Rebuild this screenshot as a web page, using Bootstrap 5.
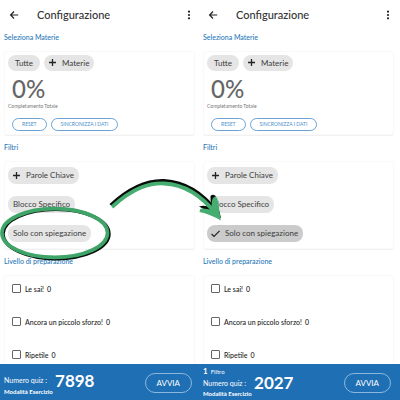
<!DOCTYPE html>
<html lang="it">
<head>
<meta charset="utf-8">
<meta name="viewport" content="width=device-width, initial-scale=1">
<title>Configurazione</title>
<link href="https://cdn.jsdelivr.net/npm/bootstrap@5.3.0/dist/css/bootstrap.min.css" rel="stylesheet">
<style>
body{font-family:Lato,"Liberation Sans",sans-serif;font-size:8px;line-height:10px;color:#333;background:#fff}
.screens{display:grid;grid-template-columns:199fr 201fr;height:100vh;overflow:hidden}
.screen{min-width:0;min-height:0}
.screen main{min-height:0;overflow:hidden;padding:0 4px}
.screen-b main,.screen-b .topbar{padding-right:6px}
.topbar{height:32px;padding:0 4px}
.topbar h1{font-size:11px;line-height:14px;font-weight:500;color:#333;margin-left:18px}
.icon-btn{border:0;background:none;padding:0;line-height:0;color:#222}
.topbar .icon-btn:first-child{margin-left:5px}
.label{font-size:7px;line-height:12px;font-weight:500;color:#2878b8;height:12px}
.panel{border:1px solid #f9f9f9;border-radius:3px;box-shadow:0 1px 1px #f0f0f0;padding:3px;margin-bottom:6px}
.panel-filters{padding-top:5px;gap:12px;height:88px}
.chip{border:0;border-radius:8px;background:#e5e5e5;color:#3c3c3c;height:16px;padding:0 5px;font-size:8px;line-height:16px;white-space:nowrap}
.panel-filters .chip{height:17px}
.chip-all{padding:0 7px}
.chip svg{margin-right:5px;margin-left:-1px}
.chip-on{background:#cbcbcb}
.percent{font-size:24px;line-height:26px;font-weight:500;color:#666;padding-left:4px;margin-top:5px}
.caption-s{font-size:5px;line-height:8px;color:#777}
.pill{border:1px solid #6ba3d2;border-radius:7px;background:#fff;color:#4a90c8;font-size:5px;line-height:10px;height:13px;padding:0 9px}
.panel-levels{padding:8px 7px;gap:23px}
.level{font-size:7px;line-height:10px;font-weight:500;color:#222;gap:4px}
.tick{appearance:none;width:9px;height:9px;border:1px solid #666;border-radius:1px;margin:0;background:#fff}
.level-value{margin-left:-1px}
.bar{background:#1f6fb5;color:#fff;min-height:36px;padding:1px 7px 0 4px;font-size:7px;line-height:9px}
.screen-b .bar{padding-right:9px}
.bar .count{font-size:17px;line-height:14px;font-weight:700}
.bar .mode{font-size:6px;line-height:8px;font-weight:700}
.bar .filters{font-size:6px;line-height:8px}
.bar .filters b{font-size:8px}
.go{border:1px solid #8ab8de;border-radius:10px;background:none;color:#fff;height:20px;padding:0 11px;font-size:8px;line-height:18px}
.annotation{left:0;top:0;width:400px;height:400px;pointer-events:none}
</style>
<script src="https://cdn.jsdelivr.net/npm/bootstrap@5.3.0/dist/js/bootstrap.bundle.min.js"></script>
</head>
<body>
<div class="screens position-relative">
  <section class="screen d-flex flex-column">
    <header class="topbar d-flex align-items-center">
      <button class="icon-btn" aria-label="Indietro"><svg width="10" height="10" viewBox="0 0 10 10" fill="none" stroke="currentColor" stroke-width="1.2"><path d="M9.200 5H1.800M5 1.500 1.600 5 5 8.500"/></svg></button>
      <h1 class="mb-0">Configurazione</h1>
      <button class="icon-btn ms-auto" aria-label="Menu"><svg width="12" height="10" viewBox="0 0 12 10" fill="currentColor"><circle cx="6" cy="1.7" r="1.1"/><circle cx="6" cy="5" r="1.1"/><circle cx="6" cy="8.3" r="1.1"/></svg></button>
    </header>
    <main class="flex-grow-1">
      <h2 class="label mb-2">Seleziona Materie</h2>
      <div class="panel">
        <div class="d-flex gap-1">
          <button class="chip chip-all">Tutte</button>
          <button class="chip d-flex align-items-center"><svg width="9" height="9" viewBox="0 0 9 9" stroke="#222" stroke-width="1.3"><path d="M4.5 1v7M1 4.5h7"/></svg>Materie</button>
        </div>
        <div class="percent">0%</div>
        <div class="caption-s">Completamento Totale</div>
        <div class="d-flex gap-1 ps-1 mt-2"><button class="pill">RESET</button><button class="pill">SINCRONIZZA I DATI</button></div>
      </div>
      <h2 class="label mb-2">Filtri</h2>
      <div class="panel panel-filters d-flex flex-column align-items-start">
        <button class="chip d-flex align-items-center"><svg width="9" height="9" viewBox="0 0 9 9" stroke="#222" stroke-width="1.3"><path d="M4.5 1v7M1 4.5h7"/></svg>Parole Chiave</button>
        <button class="chip">Blocco Specifico</button>
        <button class="chip">Solo con spiegazione</button>
      </div>
      <h2 class="label mb-2">Livello di preparazione</h2>
      <div class="panel panel-levels d-flex flex-column">
        <label class="level d-flex align-items-center"><input class="tick" type="checkbox">Le sai! <span class="level-value">0</span></label>
        <label class="level d-flex align-items-center"><input class="tick" type="checkbox">Ancora un piccolo sforzo! <span class="level-value">0</span></label>
        <label class="level d-flex align-items-center"><input class="tick" type="checkbox">Ripetile <span class="level-value">0</span></label>
      </div>
    </main>
    <footer class="bar d-flex justify-content-between align-items-center">
      <div class="pt-1"><div class="d-flex align-items-center gap-2"><span>Numero quiz :</span><span class="count">7898</span></div><div class="mode">Modalità Esercizio</div></div>
      <button class="go">AVVIA</button>
    </footer>
  </section>

  <section class="screen screen-b d-flex flex-column">
    <header class="topbar d-flex align-items-center">
      <button class="icon-btn" aria-label="Indietro"><svg width="10" height="10" viewBox="0 0 10 10" fill="none" stroke="currentColor" stroke-width="1.2"><path d="M9.200 5H1.800M5 1.500 1.600 5 5 8.500"/></svg></button>
      <h1 class="mb-0">Configurazione</h1>
      <button class="icon-btn ms-auto" aria-label="Menu"><svg width="12" height="10" viewBox="0 0 12 10" fill="currentColor"><circle cx="6" cy="1.7" r="1.1"/><circle cx="6" cy="5" r="1.1"/><circle cx="6" cy="8.3" r="1.1"/></svg></button>
    </header>
    <main class="flex-grow-1">
      <h2 class="label mb-2">Seleziona Materie</h2>
      <div class="panel">
        <div class="d-flex gap-1">
          <button class="chip chip-all">Tutte</button>
          <button class="chip d-flex align-items-center"><svg width="9" height="9" viewBox="0 0 9 9" stroke="#222" stroke-width="1.3"><path d="M4.5 1v7M1 4.5h7"/></svg>Materie</button>
        </div>
        <div class="percent">0%</div>
        <div class="caption-s">Completamento Totale</div>
        <div class="d-flex gap-1 ps-1 mt-2"><button class="pill">RESET</button><button class="pill">SINCRONIZZA I DATI</button></div>
      </div>
      <h2 class="label mb-2">Filtri</h2>
      <div class="panel panel-filters d-flex flex-column align-items-start">
        <button class="chip d-flex align-items-center"><svg width="9" height="9" viewBox="0 0 9 9" stroke="#222" stroke-width="1.3"><path d="M4.5 1v7M1 4.5h7"/></svg>Parole Chiave</button>
        <button class="chip">Blocco Specifico</button>
        <button class="chip chip-on d-flex align-items-center"><svg width="9" height="9" viewBox="0 0 9 9" fill="none" stroke="#222" stroke-width="1.2"><path d="M.6 5 3 7.4 8.6 1.8"/></svg>Solo con spiegazione</button>
      </div>
      <h2 class="label mb-2">Livello di preparazione</h2>
      <div class="panel panel-levels d-flex flex-column">
        <label class="level d-flex align-items-center"><input class="tick" type="checkbox">Le sai! <span class="level-value">0</span></label>
        <label class="level d-flex align-items-center"><input class="tick" type="checkbox">Ancora un piccolo sforzo! <span class="level-value">0</span></label>
        <label class="level d-flex align-items-center"><input class="tick" type="checkbox">Ripetile <span class="level-value">0</span></label>
      </div>
    </main>
    <footer class="bar d-flex justify-content-between align-items-center">
      <div><div class="filters"><b>1</b>&nbsp; Filtro</div><div class="d-flex align-items-center gap-2"><span>Numero quiz :</span><span class="count">2027</span></div><div class="mode">Modalità Esercizio</div></div>
      <button class="go">AVVIA</button>
    </footer>
  </section>

  <svg class="annotation position-absolute" viewBox="0 0 400 400" fill="none" aria-hidden="true">
    <ellipse cx="56" cy="234" rx="53" ry="24.7" stroke="#08130d" stroke-width="3.4"/>
    <ellipse cx="54.7" cy="233" rx="52.8" ry="24.4" stroke="#3fa468" stroke-width="3.6"/>
    <path d="M110.500 205C132 185 150 180 164 180.500C188 182 204 194 217 212" stroke="#080d0a" stroke-width="3"/>
    <path d="M199 206.500Q205 204.500 211 208L210.500 196Q213 193.500 215.500 196L221 218Z" fill="#080d0a"/>
    <path d="M112 207C134 187 150 183 164 183.500C186 184.500 202 196 216 214" stroke="#46ad70" stroke-width="3.8"/>
    <path d="M199.500 212Q200 208 202 208.500Q208 208.500 212 210Q211 201 213 198Q216 195 217.500 199L220.800 220.500Q210 214 199.500 212Z" fill="#46ad70"/>
  </svg>
</div>
</body>
</html>
